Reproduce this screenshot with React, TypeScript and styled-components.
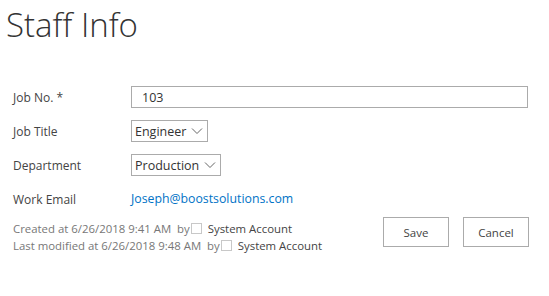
import * as React from 'react';
import styled, { createGlobalStyle } from 'styled-components';

const GlobalStyle = createGlobalStyle`
    body {
        margin: 0;
        background: #ffffff;
        font-family: 'Open Sans', 'Noto Sans', sans-serif;
    }
`

const Page = styled.div`
    width: 549px;
    height: 296px;
    box-sizing: border-box;
    padding: 3px 20px 0 6px;
    display: flex;
    flex-direction: column;
`

const Title = styled.h1`
    margin: 0;
    font-size: 33px;
    font-weight: 300;
    line-height: 44px;
    color: #333333;
    letter-spacing: 0;
`

const Form = styled.div`
    margin-top: 39px;
    padding-left: 7px;
    display: flex;
    flex-direction: column;
    gap: 12px;
`

const Row = styled.div`
    display: grid;
    grid-template-columns: 118px 1fr;
    align-items: center;
    height: 22px;
`

const Label = styled.div`
    font-size: 12px;
    color: #444444;
`

const TextBox = styled.div`
    height: 22px;
    box-sizing: border-box;
    border: 1px solid #ababab;
    padding: 0 10px;
    display: flex;
    align-items: center;
    font-size: 12.5px;
    color: #333333;
    width: 397px;
`

const Select = styled.div`
    height: 22px;
    box-sizing: border-box;
    border: 1px solid #ababab;
    padding: 0 4px 0 3px;
    display: inline-flex;
    align-items: center;
    gap: 5px;
    font-size: 12.5px;
    color: #333333;
    justify-self: start;
`

const Link = styled.span`
    font-size: 12.3px;
    color: #0072c6;
    margin-top: -2px;
`

const Footer = styled.div`
    margin-top: 6px;
    padding-left: 7px;
    display: flex;
    justify-content: space-between;
    align-items: flex-start;
`

const Meta = styled.div`
    display: flex;
    flex-direction: column;
    padding-top: 4px;
    font-size: 11.4px;
    line-height: 17px;
    color: #777777;
`

const MetaLine = styled.div`
    display: flex;
    align-items: center;
    white-space: pre;
`

const Box = styled.span`
    display: inline-block;
    width: 9px;
    height: 9px;
    border: 1px solid #c8c8c8;
    margin: 0 6px 0 1px;
`

const Account = styled.span`
    color: #444444;
`

const Buttons = styled.div`
    display: flex;
    gap: 14px;
    padding-top: 1px;
`

const Button = styled.div`
    width: 66px;
    height: 30px;
    box-sizing: border-box;
    border: 1px solid #ababab;
    background: #ffffff;
    display: flex;
    align-items: center;
    justify-content: center;
    font-size: 11.5px;
    color: #444444;
`

const Chevron = () => (
    <svg width="12" height="8" viewBox="0 0 12 8">
        <polyline points="1,1.5 6,6.5 11,1.5" fill="none" stroke="#666" strokeWidth="1" />
    </svg>
)

const App: React.FC = () => {
    return (
        <Page>
            <GlobalStyle />
            <Title>Staff Info</Title>
            <Form>
                <Row>
                    <Label>Job No. *</Label>
                    <TextBox>103</TextBox>
                </Row>
                <Row>
                    <Label>Job Title</Label>
                    <Select>Engineer <Chevron /></Select>
                </Row>
                <Row>
                    <Label>Department</Label>
                    <Select>Production <Chevron /></Select>
                </Row>
                <Row>
                    <Label>Work Email</Label>
                    <Link>Joseph@boostsolutions.com</Link>
                </Row>
            </Form>
            <Footer>
                <Meta>
                    <MetaLine>Created at 6/26/2018 9:41 AM  by<Box /><Account>System Account</Account></MetaLine>
                    <MetaLine>Last modified at 6/26/2018 9:48 AM  by<Box /><Account>System Account</Account></MetaLine>
                </Meta>
                <Buttons>
                    <Button>Save</Button>
                    <Button>Cancel</Button>
                </Buttons>
            </Footer>
        </Page>
    );
};

export default App;
